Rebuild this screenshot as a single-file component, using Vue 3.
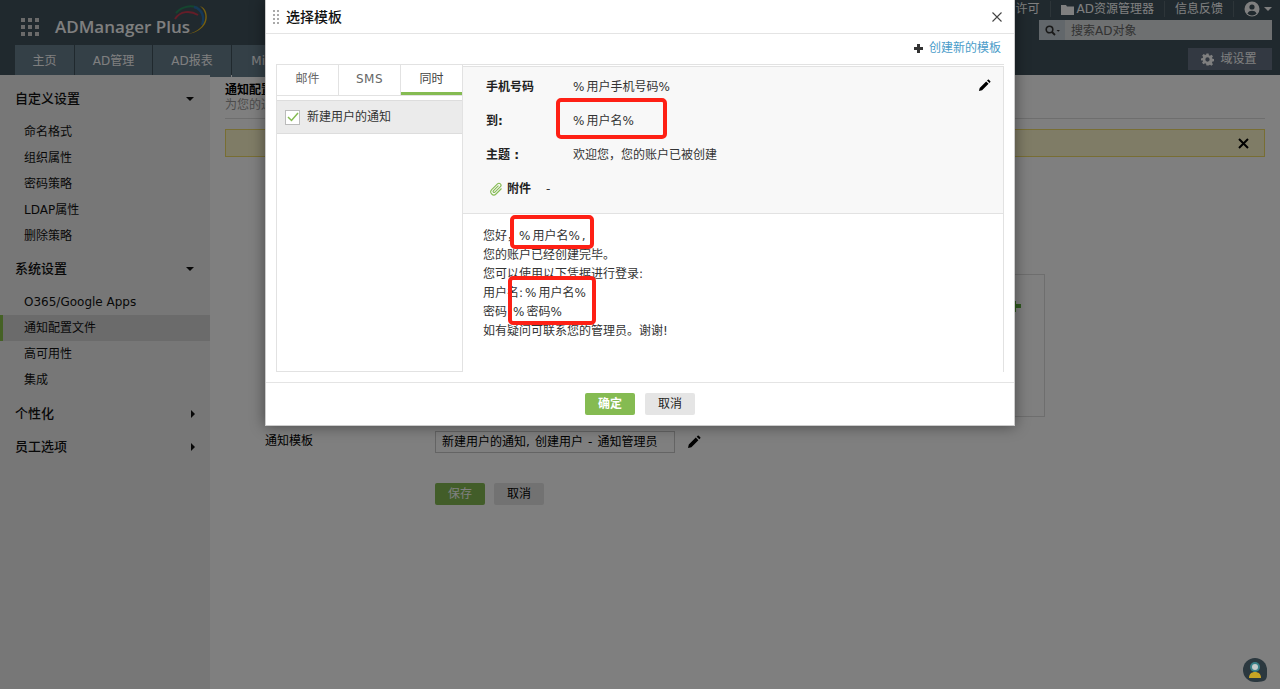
<script setup>
const setA = ['命名格式', '组织属性', '密码策略', 'LDAP属性', '删除策略']
const setB = ['O365/Google Apps', '通知配置文件', '高可用性', '集成']
const tabs = ['主页', 'AD管理', 'AD报表', 'Microsoft 365']
const modalTabs = ['邮件', 'SMS', '同时']
const bodyLines = ['您好，%用户名%,', '您的账户已经创建完毕。', '您可以使用以下凭据进行登录:', '用户名:%用户名%', '密码:%密码%', '如有疑问可联系您的管理员。谢谢!']
const parts = (line) => line.split(/(%|:)/).filter(Boolean)
const dots = Array.from({ length: 9 })
const grip = Array.from({ length: 8 })
const pencil = 'M1 13l.8-3.4 7-7 2.6 2.6-7 7L1 13zM9.7 1.7l1-1c.3-.3.7-.3 1 0l1.6 1.6c.3.3.3.7 0 1l-1 1-2.6-2.6z'
</script>

<template>
  <div class="page">
    <header class="header">
      <div class="top">
        <div class="brand">
          <div class="dots"><i v-for="(d, i) in dots" :key="i"></i></div>
          <span class="logo">ADManager Plus</span>
          <svg class="swirl" width="36" height="32" viewBox="0 0 36 32" fill="none">
            <path d="M2 8C8 1 18 0 24 3" stroke="#2a8a5e" stroke-width="2" />
            <path d="M1 14C6 6 16 5 24 10" stroke="#c83a50" stroke-width="2" />
            <path d="M20 2C28 4 31 12 28 20" stroke="#2a70b0" stroke-width="2.4" />
            <path d="M26 1C35 8 34 24 14 29C24 28 36 20 32 7C31 4 29 2 26 1Z" fill="#f0c01e" />
          </svg>
        </div>
        <div class="tools">
          <nav class="topnav">
            <span>许可</span><b></b>
            <svg width="13" height="11" viewBox="0 0 13 11"><path d="M0 1h5l1 1.5h7V11H0z" fill="#fff" /></svg>
            <span class="afterfolder">AD资源管理器</span><b></b>
            <span>信息反馈</span><b></b>
            <svg width="16" height="16" viewBox="0 0 16 16"><circle cx="8" cy="8" r="7.5" fill="#fff" /><circle cx="8" cy="6" r="2.6" fill="#40525c" /><path d="M3.4 12.6C4.4 10.4 6 9.8 8 9.8s3.600.6 4.600 2.800C11.400 13.900 9.800 14.600 8 14.600s-3.400-.7-4.600-2z" fill="#40525c" /></svg>
            <i class="caretsm"></i>
          </nav>
          <div class="search">
            <span class="searchicon">
              <svg width="15" height="11" viewBox="0 0 15 11" fill="none"><circle cx="4.500" cy="4.500" r="3.300" stroke="#333" stroke-width="1.600" /><path d="M7 7l3 3" stroke="#333" stroke-width="1.800" /><path d="M11.500 5h3.500l-1.750 1.800z" fill="#333" /></svg>
            </span>
            <span class="searchtext">搜索AD对象</span>
          </div>
        </div>
      </div>
      <div class="tabrow">
        <div class="tabs">
          <span v-for="t in tabs" :key="t" class="tab">{{ t }}</span>
        </div>
        <div class="domain">
          <svg width="13" height="13" viewBox="0 0 24 24"><path fill="#fff" d="M10 1h4l.6 3.200 2 .8 2.700-1.800 2.800 2.800-1.800 2.700.8 2 3.200.6v4l-3.200.6-.8 2 1.800 2.700-2.800 2.800-2.700-1.800-2 .8L14 23h-4l-.6-3.200-2-.8-2.700 1.800-2.800-2.800 1.800-2.700-.8-2L0 14v-4l3.200-.6.8-2L2.200 4.700 5 1.900l2.700 1.800 2-.8zM12 8a4 4 0 100 8 4 4 0 000-8z" /></svg>
          <span>域设置</span>
        </div>
      </div>
    </header>

    <div class="layout">
      <aside class="sidebar">
        <div class="group"><span>自定义设置</span><i class="down"></i></div>
        <ul class="items">
          <li v-for="s in setA" :key="s">{{ s }}</li>
        </ul>
        <div class="group"><span>系统设置</span><i class="down"></i></div>
        <ul class="items second">
          <li v-for="s in setB" :key="s" :class="{ on: s === '通知配置文件' }">{{ s }}</li>
        </ul>
        <div class="group wide"><span>个性化</span><i class="right"></i></div>
        <div class="group"><span>员工选项</span><i class="right"></i></div>
      </aside>
      <main class="main">
        <h1 class="pagetitle">通知配置文件</h1>
        <p class="subtitle">为您的通知配置文件进行设置</p>
        <div class="rule"></div>
        <div class="alert">
          <svg width="11" height="11" viewBox="0 0 11 11"><path d="M1 1l9 9M10 1l-9 9" stroke="#000" stroke-width="2" /></svg>
        </div>
        <div class="panel"><span class="plus"></span></div>
        <div class="formrow">
          <label>通知模板</label>
          <div class="input">新建用户的通知, 创建用户 - 通知管理员</div>
          <svg class="pen" width="14" height="14" viewBox="0 0 14 14"><path :d="pencil" fill="#000" /></svg>
        </div>
        <div class="formbtns">
          <span class="btn ok">保存</span>
          <span class="btn no">取消</span>
        </div>
      </main>
    </div>

    <div class="overlay"></div>

    <div class="chat">
      <svg width="26" height="26" viewBox="0 0 26 26">
        <path d="M13 1a12 12 0 1 0 0 24c3 0 6-.2 8.500-1 2.500-.8 3.500-3 3.500-6.500V13A12 12 0 0 0 13 1z" fill="#2b383f" />
        <circle cx="13" cy="10" r="5" fill="#3a8088" />
        <circle cx="13" cy="10" r="3" fill="#c4caca" />
        <path d="M7 21c0-4 2.500-6 6-6s6 2 6 6z" fill="#c8a424" />
      </svg>
    </div>

    <section class="modal">
      <div class="mhead">
        <div class="grip"><i v-for="(g, i) in grip" :key="i"></i></div>
        <span class="mtitle">选择模板</span>
        <svg class="mclose" width="10" height="10" viewBox="0 0 10 10"><path d="M.5.500l9 9M9.500.500l-9 9" stroke="#444" stroke-width="1.100" /></svg>
      </div>
      <div class="mlink">
        <svg width="9" height="9" viewBox="0 0 9 9"><path d="M3 0h3v3h3v3H6v3H3V6H0V3h3z" fill="#333" /></svg>
        <span>创建新的模板</span>
      </div>
      <div class="mpanes">
        <div class="left">
          <div class="ltabs">
            <span v-for="t in modalTabs" :key="t" :class="{ act: t === '同时', latin: t === 'SMS' }">{{ t }}</span>
          </div>
          <div class="lrow">
            <span class="check">
              <svg width="12" height="10" viewBox="0 0 12 10" fill="none"><path d="M1 5l3.500 3.500L11 1" stroke="#85bb52" stroke-width="1.500" /></svg>
            </span>
            <span>新建用户的通知</span>
          </div>
        </div>
        <div class="right-pane">
          <div class="meta">
            <div class="mrow"><b>手机号码</b><span><span v-for="(p, i) in parts('%用户手机号码%')" :key="i" :class="{ pc: p === '%' }">{{ p }}</span></span></div>
            <div class="mrow"><b>到:</b><span><span v-for="(p, i) in parts('%用户名%')" :key="i" :class="{ pc: p === '%' }">{{ p }}</span></span></div>
            <div class="mrow"><b>主题 :</b><span>欢迎您，您的账户已被创建</span></div>
            <div class="mrow attach">
              <svg width="14" height="14" viewBox="0 0 14 14" fill="none"><path d="M12.500 6.500L7 12a3 3 0 0 1-4.300-4.300L8.500 1.800a2 2 0 0 1 2.900 2.900L5.700 10.300a1 1 0 0 1-1.400-1.400L9.500 3.700" stroke="#85bb52" stroke-width="1.100" /></svg>
              <b>附件</b><span>-</span>
            </div>
            <svg class="mpen" width="13" height="13" viewBox="0 0 14 14"><path :d="pencil" fill="#000" /></svg>
          </div>
          <div class="mbody">
            <div v-for="l in bodyLines" :key="l"><span v-for="(p, i) in parts(l)" :key="i" :class="{ pc: p === '%' || p === ':' }">{{ p }}</span></div>
          </div>
        </div>
      </div>
      <div class="mfoot">
        <span class="btn ok2">确定</span>
        <span class="btn no2">取消</span>
      </div>
    </section>

    <div class="mark m1"></div>
    <div class="mark m2"></div>
    <div class="mark m3"></div>
  </div>
</template>

<style>
html, body { margin: 0; height: 100%; overflow: hidden; }
</style>

<style scoped>
.page { position: relative; width: 1280px; height: 689px; overflow: hidden; background: #fff; font: 12px/1.2 "DejaVu Sans", "Noto Sans CJK SC", sans-serif; color: #000; }
.header { height: 75px; background: #40525c; display: flex; flex-direction: column; }
.top { height: 45px; display: flex; justify-content: space-between; }
.brand { position: relative; display: flex; align-items: center; padding-left: 21px; }
.dots { display: grid; grid-template-columns: repeat(3, 4px); gap: 3px; margin-top: 8px; }
.dots i { width: 4px; height: 4px; background: #d4d4d4; }
.logo { margin-left: 16px; margin-top: 9px; font: 600 17px/22px "Open Sans", sans-serif; color: #fff; }
.swirl { position: absolute; left: 174px; top: 5px; }
.tools { display: flex; flex-direction: column; align-items: flex-end; padding-right: 8px; }
.topnav { height: 18px; margin-bottom: 2px; display: flex; align-items: center; color: #fff; }
.topnav b { width: 1px; height: 16px; background: #5b6a72; margin: 0 10px; }
.afterfolder { margin-left: 3px; }
.caretsm { width: 0; height: 0; margin-left: 4px; border: 4px solid transparent; border-top: 4px solid #fff; border-bottom: 0; }
.search { width: 233px; height: 20px; display: flex; background: #dce0e2; }
.searchicon { width: 26px; background: #c4ced6; display: flex; align-items: center; justify-content: center; }
.searchtext { padding: 1px 0 0 6px; line-height: 20px; color: #666; }
.tabrow { height: 30px; display: flex; justify-content: space-between; padding: 0 8px 0 15px; }
.tabs { display: flex; height: 32px; }
.tab { width: 77px; margin-right: 1px; background: #68808f; color: #fff; text-align: center; line-height: 32px; flex: none; }
.tab:first-child { width: 59px; }
.tab:nth-child(3) { width: 78px; }
.tab:nth-child(4) { width: 120px; }
.domain { width: 84px; height: 22px; margin-top: 3px; background: #667384; color: #fff; display: flex; align-items: center; justify-content: center; gap: 6px; padding-right: 2px; box-sizing: border-box; }
.layout { display: flex; height: 614px; }
.sidebar { width: 210px; flex: none; background: #eee; padding-top: 8px; box-sizing: border-box; color: #111; }
.group { height: 32px; display: flex; align-items: center; justify-content: space-between; padding: 0 16px 0 15px; font-size: 13px; font-weight: 500; }
.group.wide { margin-bottom: 1px; }
.down { width: 0; height: 0; border: 4px solid transparent; border-top: 4px solid #111; border-bottom: 0; }
.right { width: 0; height: 0; border: 4px solid transparent; border-left: 4px solid #111; border-right: 0; margin-right: -1px; }
.items { list-style: none; margin: 0; padding: 4px 0; }
.items.second { padding-bottom: 5px; }
.items li { height: 26px; line-height: 26px; padding-left: 24px; box-sizing: border-box; }
.items li.on { background: #d6d6d6; border-left: 3px solid #8bc34a; padding-left: 21px; }
.main { flex: 1; padding: 8px 15px 0; }
.pagetitle { margin: 0; font-size: 12px; line-height: 14px; font-weight: 700; }
.subtitle { margin: 1px 0 0; font-size: 12px; line-height: 14px; color: #999; }
.rule { height: 1px; background: #ddd; margin-top: 6px; }
.alert { height: 28px; margin-top: 10px; box-sizing: border-box; background: #fff9cc; border: 1px solid #f0dc66; display: flex; align-items: center; justify-content: flex-end; padding-right: 15px; }
.panel { position: relative; width: 610px; height: 143px; margin: 117px 0 0 210px; box-sizing: border-box; border: 1px solid #ddd; }
.plus { position: absolute; left: 578px; top: 26px; width: 2px; height: 11px; background: #5cb13a; }
.plus::after { content: ""; position: absolute; left: 0; top: 3px; width: 7px; height: 4px; background: #5cb13a; }
.formrow { display: flex; align-items: center; margin: 14px 0 0 40px; }
.formrow label { width: 170px; flex: none; margin-bottom: 2px; }
.input { width: 240px; height: 22px; box-sizing: border-box; border: 1px solid #c8c8c8; line-height: 20px; padding-left: 6px; white-space: nowrap; overflow: hidden; word-spacing: 1.300px; }
.pen { margin-left: 12px; }
.formbtns { display: flex; gap: 9px; margin: 30px 0 0 210px; }
.btn { width: 50px; height: 22px; line-height: 22px; text-align: center; border-radius: 2px; }
.ok { background: #85bb52; color: #fff; }
.no { background: #e5e5e5; }
.chat { position: absolute; left: 1242px; top: 657px; width: 26px; height: 26px; }
.overlay { position: absolute; inset: 0; background: rgba(0, 0, 0, .5); }
.modal { position: absolute; left: 265px; top: 0; width: 750px; height: 426px; box-sizing: border-box; background: #fff; border: 1px solid #ccc; border-top: 0; box-shadow: 0 0 14px rgba(0, 0, 0, .45); }
.mhead { padding: 1px 0 0 7px; box-sizing: content-box; height: 32px; border-bottom: 1px solid #e4e4e4; display: flex; align-items: center; }
.grip { display: grid; grid-template-columns: repeat(2, 2px); gap: 2px; }
.grip i { width: 2px; height: 2px; background: #aaa; }
.mtitle { margin-left: 7px; font-size: 14px; font-weight: 500; color: #111; }
.mclose { margin-left: auto; margin-right: 12px; }
.mlink { height: 30px; display: flex; justify-content: flex-end; align-items: center; gap: 6px; padding: 0 13px 1px 0; box-sizing: border-box; color: #4a9cc9; }
.mpanes { height: 308px; margin: 0 10px; display: flex; border-top: 1px solid #e2e2e2; box-sizing: border-box; }
.left { width: 187px; flex: none; border: 1px solid #e2e2e2; border-top: 0; box-sizing: border-box; }
.ltabs { display: flex; height: 30px; border-bottom: 1px solid #e2e2e2; box-sizing: content-box; }
.ltabs span { flex: 1; text-align: center; line-height: 28px; color: #666; border-right: 1px solid #e2e2e2; }
.ltabs span:last-child { border-right: 0; }
.ltabs .latin { letter-spacing: .5px; }
.ltabs .act { color: #444; border-bottom: 3px solid #85bb52; height: 27px; }
.lrow { margin-top: 4px; height: 34px; box-sizing: border-box; background: #ebebeb; border-top: 1px solid #ddd; border-bottom: 1px solid #ddd; display: flex; align-items: center; padding-left: 8px; gap: 7px; color: #333; }
.check { width: 15px; height: 15px; box-sizing: border-box; background: #fff; border: 1px solid #bbb; display: flex; align-items: center; justify-content: center; }
.right-pane { flex: 1; margin-top: 1px; border-right: 1px solid #e2e2e2; border-left: 1px solid #e2e2e2; margin-left: -1px; display: flex; flex-direction: column; }
.meta { position: relative; height: 148px; box-sizing: border-box; background: #f8f8f8; border-bottom: 1px solid #e2e2e2; border-top: 1px solid #e2e2e2; padding: 3px 0 0 23px; }
.mrow { height: 34px; display: flex; align-items: center; color: #333; }
.mrow b { width: 87px; flex: none; color: #222; font-weight: 700; }
.pc { letter-spacing: 2px; }
.attach svg { margin: 0 4px 0 3px; }
.attach b { width: 39px; }
.mpen { position: absolute; right: 12px; top: 12px; }
.mbody { padding: 13px 0 0 20px; line-height: 19px; color: #333; }
.mfoot { margin-top: 10px; height: 43px; border-top: 1px solid #e4e4e4; display: flex; justify-content: center; align-items: center; gap: 10px; box-sizing: border-box; }
.ok2 { background: #85bb52; color: #fff; font-weight: 700; }
.no2 { background: #e5e5e5; color: #222; }
.mark { position: absolute; box-sizing: border-box; border: 4px solid #fe2015; border-radius: 5px; }
.m1 { left: 556px; top: 98px; width: 111px; height: 41px; }
.m2 { left: 510px; top: 215px; width: 84px; height: 34px; }
.m3 { left: 508px; top: 276px; width: 88px; height: 49px; }
</style>
